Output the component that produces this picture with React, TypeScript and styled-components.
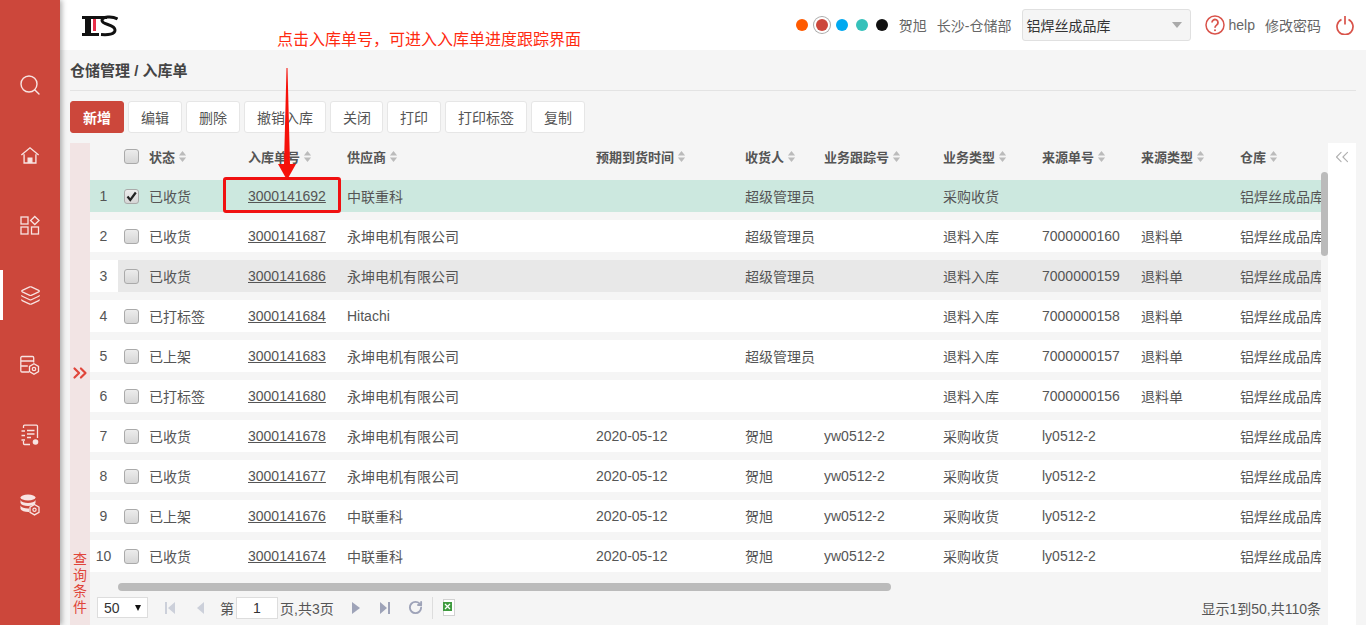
import React from 'react'
import styled, { createGlobalStyle } from 'styled-components'
import { Search, Layers, ChevronsRight, ChevronsLeft, RotateCw } from 'lucide-react'

const GlobalStyle = createGlobalStyle`
    html, body {
        margin: 0;
        padding: 0;
        height: 100%;
        overflow: hidden;
        background: #f5f5f5;
        font-family: "Liberation Sans", "Noto Sans CJK SC", sans-serif;
        font-size: 14px;
        color: #555;
    }
    * { box-sizing: border-box; }
`

const Page = styled.div`
    position: relative;
    display: flex;
    width: 1366px;
    height: 625px;
    overflow: hidden;
`

const Sidebar = styled.nav`
    width: 60px;
    flex: none;
    padding-top: 50px;
    background-color: #cc473b;
    box-shadow: 2px 0 5px rgba(0, 0, 0, 0.3);
    z-index: 2;
`

const NavItem = styled.div`
    height: 70px;
    display: flex;
    align-items: center;
    justify-content: center;
    color: #f8e4e2;
    position: relative;
`

const ActiveBar = styled.span`
    position: absolute;
    left: 0;
    top: 10px;
    width: 3px;
    height: 50px;
    background: #fff;
`

const Main = styled.div`
    flex: 1;
    display: flex;
    flex-direction: column;
    min-width: 0;
`

const Header = styled.header`
    height: 50px;
    flex: none;
    background: #fff;
    display: flex;
    align-items: center;
    padding-left: 22px;
    padding-right: 12px;
`

const Logo = styled.svg`
    width: 36px;
    height: 22px;
    margin-top: 1px;
`

const HeaderRight = styled.div`
    margin-left: auto;
    display: flex;
    align-items: center;
`

const Dots = styled.div`
    display: flex;
    align-items: center;
    gap: 8px;
    margin-right: 11px;
`

const Dot = styled.span<{ $color: string; $active?: boolean }>`
    width: 12px;
    height: 12px;
    border-radius: 50%;
    background: ${p => p.$color};
    ${p => p.$active && 'box-shadow: 0 0 0 2px #fff, 0 0 0 3px #aaa;'}
`

const UserText = styled.span<{ $gap: number; $lead?: number }>`
    margin-left: ${p => p.$lead || 0}px;
    margin-right: ${p => p.$gap}px;
    white-space: nowrap;
    color: #666;
`

const StoreSelect = styled.div`
    width: 169px;
    height: 32px;
    margin-right: 14px;
    padding: 0 4px;
    display: flex;
    align-items: center;
    justify-content: space-between;
    background: #f5f5f5;
    border: 1px solid #e0e0e0;
    border-radius: 3px;
    color: #333;
`

const Caret = styled.span`
    width: 0;
    height: 0;
    margin-right: 4px;
    border-left: 5px solid transparent;
    border-right: 5px solid transparent;
    border-top: 6px solid #aaa;
`

const Content = styled.main`
    flex: 1;
    min-height: 0;
    display: flex;
    flex-direction: column;
    padding: 0 10px;
`

const Crumb = styled.div`
    height: 41px;
    flex: none;
    line-height: 41px;
    font-size: 15px;
    font-weight: bold;
    color: #444;
    border-bottom: 1px solid #e3e3e3;
`

const Toolbar = styled.div`
    display: flex;
    gap: 4px;
    flex: none;
    margin: 10px 0;
`

const Btn = styled.button<{ $primary?: boolean; $tight?: boolean }>`
    height: 32px;
    padding: 0 ${p => (p.$tight ? '11px' : '12px')} 0 12px;
    font: inherit;
    border-radius: 3px;
    border: 1px solid ${p => (p.$primary ? '#cc473b' : '#e6e6e6')};
    background: ${p => (p.$primary ? '#cc473b' : '#fff')};
    color: ${p => (p.$primary ? '#fff' : '#555')};
    font-weight: ${p => (p.$primary ? 'bold' : 'normal')};
`

const Body = styled.div`
    flex: 1;
    min-height: 0;
    display: flex;
`

const QueryStrip = styled.div`
    width: 20px;
    flex: none;
    display: flex;
    flex-direction: column;
    align-items: center;
    justify-content: space-between;
    padding: 219px 0 10px;
    background: #f2e4e4;
    color: #e0453a;
`

const QueryText = styled.div`
    width: 14px;
    line-height: 16px;
    text-align: center;
`

const TableArea = styled.div`
    width: 1231px;
    flex: none;
    display: flex;
    flex-direction: column;
    overflow: hidden;
`

const gridCols = '28px 31px 99px 99px 249px 149px 79px 119px 99px 99px 99px 110px'

const HeadRow = styled.div`
    display: grid;
    grid-template-columns: ${gridCols};
    height: 37px;
    padding-bottom: 11px;
    flex: none;
    align-items: center;
    font-size: 13px;
    font-weight: bold;
    color: #555;
`

const HeadCell = styled.div`
    display: flex;
    align-items: center;
    gap: 3px;
    white-space: nowrap;
`

const Rows = styled.div`
    height: 400px;
    flex: none;
    overflow: hidden;
`

const Row = styled.div<{ $state?: 'checked' | 'hover' }>`
    display: grid;
    grid-template-columns: ${gridCols};
    height: 32px;
    margin-bottom: 8px;
    align-items: center;
    white-space: nowrap;
    background: ${p => (p.$state === 'checked' ? '#cce8df' : p.$state === 'hover' ? '#e8e8e8' : '#fff')};
`

const IndexCell = styled.div<{ $white?: boolean }>`
    height: 100%;
    display: flex;
    align-items: center;
    justify-content: center;
    padding-right: 1px;
    background: ${p => (p.$white ? '#fff' : 'transparent')};
`

const CheckCell = styled.div`
    display: flex;
    align-items: center;
    padding-left: 6px;
`

const CheckBox = styled.span`
    width: 15px;
    height: 15px;
    display: flex;
    align-items: center;
    justify-content: center;
    border: 1px solid #aaa;
    border-radius: 3px;
    background: linear-gradient(#ececec, #d6d6d6);
`

const OrderLink = styled.a`
    color: #555;
    text-decoration: underline;
`

const HScroll = styled.div`
    height: 14px;
    flex: none;
    padding: 3px 0 3px 28px;
`

const HThumb = styled.div`
    width: 773px;
    height: 8px;
    border-radius: 4px;
    background: #bbb;
`

const Pager = styled.div`
    height: 31px;
    flex: none;
    display: flex;
    align-items: center;
    padding-left: 7px;
    padding-bottom: 4px;
    color: #555;
`

const PageSize = styled.div`
    width: 51px;
    height: 21px;
    display: flex;
    align-items: center;
    justify-content: space-between;
    padding: 0 6px 0 6px;
    background: #fff;
    border: 1px solid #ddd;
    color: #333;
    margin-right: 17px;
`

const SizeCaret = styled.span`
    width: 0;
    height: 0;
    border-left: 3.5px solid transparent;
    border-right: 3.5px solid transparent;
    border-top: 6px solid #111;
`

const PagerIcon = styled.svg<{ $gap: number; $lead?: number }>`
    width: 10px;
    height: 12px;
    flex: none;
    margin-left: ${p => p.$lead || 0}px;
    margin-right: ${p => p.$gap}px;
`

const PageInput = styled.div`
    width: 42px;
    height: 22px;
    margin: 0 2px;
    line-height: 20px;
    text-align: center;
    background: #fff;
    border: 1px solid #ddd;
    color: #333;
`

const PagerSep = styled.span`
    width: 1px;
    height: 22px;
    margin: 0 9px;
    background: #ddd;
`

const PagerInfo = styled.span`
    margin-left: auto;
`

const VGutter = styled.div`
    width: 7px;
    flex: none;
    padding-top: 29px;
`

const VThumb = styled.div`
    height: 84px;
    border-radius: 4px;
    background: #bbb;
`

const RightPanel = styled.aside`
    width: 28px;
    flex: none;
    padding-top: 3px;
    background: #fff;
    display: flex;
    justify-content: center;
    align-items: flex-start;
    color: #b0b0b0;
`

const NoteText = styled.div`
    position: absolute;
    left: 277px;
    top: 31px;
    font-size: 16px;
    line-height: 18px;
    color: #ff2a10;
    white-space: nowrap;
`

const NoteArrow = styled.svg`
    position: absolute;
    left: 277px;
    top: 68px;
    width: 20px;
    height: 112px;
`

const NoteBox = styled.div`
    position: absolute;
    left: 223px;
    top: 177px;
    width: 118px;
    height: 36px;
    border: 3px solid #f01010;
    border-radius: 3px;
`

const HomeIcon = () => (
    <svg width="20" height="19" viewBox="0 0 22 20" fill="none" stroke="currentColor" strokeWidth="1.5">
        <path d="M1.500 9.500 11 1.500l9.500 8M4.500 8.500V18.300h13V8.500" />
        <path d="M9 18.300V13h4v5.300" fill="currentColor" />
    </svg>
)

const GridIcon = () => (
    <svg width="20" height="20" viewBox="0 0 20 20" fill="none" stroke="currentColor" strokeWidth="1.3">
        <rect x="1" y="2" width="7" height="7" />
        <path d="M14.800 1.500 19 5.500l-4.200 4-4.200-4z" />
        <rect x="1" y="12" width="7" height="7" />
        <rect x="11.500" y="12" width="7" height="7" />
    </svg>
)

const TableGearIcon = () => (
    <svg width="20" height="20" viewBox="0 0 20 20" fill="none" stroke="currentColor" strokeWidth="1.3">
        <path d="M9 17H2a1.200 1.200 0 0 1-1.200-1.200V2.700A1.200 1.200 0 0 1 2 1.500h10.500a1.200 1.200 0 0 1 1.200 1.200V7.500M.8 6h12.900M.8 11h7" />
        <path d="m14 8.800 4.500 2.600v5.200L14 19.200l-4.500-2.600v-5.200z" />
        <circle cx="14" cy="14" r="1.700" />
    </svg>
)

const NoteIcon = () => (
    <svg width="20" height="22" viewBox="0 0 20 22" fill="none" stroke="currentColor" strokeWidth="1.3">
        <path d="M3.500 4V2.200a1 1 0 0 1 1-1h12a1 1 0 0 1 1 1V14M10 20.500H4.500a1 1 0 0 1-1-1V17" />
        <path d="M1.500 7h3.500M1.500 11.500h3.500M1.500 16h3.500M7 6.500h7.500M7 10h7.500M7 13.500h4" />
        <circle cx="15.500" cy="18" r="2.800" fill="currentColor" stroke="none" />
    </svg>
)

const DbGearIcon = () => (
    <svg width="20" height="22" viewBox="0 0 20 22">
        <ellipse cx="8" cy="3.500" rx="7.500" ry="3" fill="currentColor" />
        <path d="M.5 6c1 2.200 4 3 7.500 3s6.500-.8 7.500-3v3c-1 2.200-4 3-7.500 3S1.500 11.200.5 9zM.5 11.500c1 2.200 4 3 7.500 3 .5 0 1 0 1.500-.1l-.5 3.500C5 18 1.500 17 .5 15z" fill="currentColor" />
        <path d="m14.500 10.500 4.500 2.600v5.200l-4.500 2.600-4.500-2.600v-5.200z" fill="#cc473b" stroke="currentColor" strokeWidth="1.3" />
        <circle cx="14.500" cy="15.700" r="1.600" fill="none" stroke="currentColor" strokeWidth="1.2" />
    </svg>
)

const SortIcon = () => (
    <svg width="9" height="11" viewBox="0 0 10 12" fill="#bbb">
        <path d="M5 0l4 5H1zM5 12 1 7h8z" />
    </svg>
)

const columns = ['状态', '入库单号', '供应商', '预期到货时间', '收货人', '业务跟踪号', '业务类型', '来源单号', '来源类型', '仓库']

type RowData = {
    status: string
    no: string
    supplier: string
    date?: string
    receiver?: string
    track?: string
    type: string
    source?: string
    sourceType?: string
}

const rows: RowData[] = [
    { status: '已收货', no: '3000141692', supplier: '中联重科', receiver: '超级管理员', type: '采购收货' },
    { status: '已收货', no: '3000141687', supplier: '永坤电机有限公司', receiver: '超级管理员', type: '退料入库', source: '7000000160', sourceType: '退料单' },
    { status: '已收货', no: '3000141686', supplier: '永坤电机有限公司', receiver: '超级管理员', type: '退料入库', source: '7000000159', sourceType: '退料单' },
    { status: '已打标签', no: '3000141684', supplier: 'Hitachi', type: '退料入库', source: '7000000158', sourceType: '退料单' },
    { status: '已上架', no: '3000141683', supplier: '永坤电机有限公司', receiver: '超级管理员', type: '退料入库', source: '7000000157', sourceType: '退料单' },
    { status: '已打标签', no: '3000141680', supplier: '永坤电机有限公司', type: '退料入库', source: '7000000156', sourceType: '退料单' },
    { status: '已收货', no: '3000141678', supplier: '永坤电机有限公司', date: '2020-05-12', receiver: '贺旭', track: 'yw0512-2', type: '采购收货', source: 'ly0512-2' },
    { status: '已收货', no: '3000141677', supplier: '永坤电机有限公司', date: '2020-05-12', receiver: '贺旭', track: 'yw0512-2', type: '采购收货', source: 'ly0512-2' },
    { status: '已上架', no: '3000141676', supplier: '中联重科', date: '2020-05-12', receiver: '贺旭', track: 'yw0512-2', type: '采购收货', source: 'ly0512-2' },
    { status: '已收货', no: '3000141674', supplier: '中联重科', date: '2020-05-12', receiver: '贺旭', track: 'yw0512-2', type: '采购收货', source: 'ly0512-2' },
]

const App = () => {
    return (
        <Page>
            <GlobalStyle />
            <Sidebar>
                <NavItem><Search size={24} strokeWidth={1.4} /></NavItem>
                <NavItem><HomeIcon /></NavItem>
                <NavItem><GridIcon /></NavItem>
                <NavItem><ActiveBar /><Layers size={21} strokeWidth={1.4} /></NavItem>
                <NavItem><TableGearIcon /></NavItem>
                <NavItem><NoteIcon /></NavItem>
                <NavItem><DbGearIcon /></NavItem>
            </Sidebar>
            <Main>
                <Header>
                    <Logo viewBox="0 0 36 22">
                        <path d="M0 1h25v3H9v14h8v3H0v-3h3V4H0z" fill="#111" />
                        <rect x="11" y="4" width="3" height="12" fill="#e8304a" />
                        <path d="M35.500 4C30 .8 20 1.500 20 5.500c0 4.500 13 3.500 13 9.500 0 4.500-7 5-14 4.500" fill="none" stroke="#111" strokeWidth="3" />
                    </Logo>
                    <HeaderRight>
                        <Dots>
                            <Dot $color="#ff5a00" />
                            <Dot $color="#cc473b" $active />
                            <Dot $color="#00a9f0" />
                            <Dot $color="#36c1ba" />
                            <Dot $color="#111" />
                        </Dots>
                        <UserText $gap={10}>贺旭</UserText>
                        <UserText $gap={10}>长沙-仓储部</UserText>
                        <StoreSelect>铝焊丝成品库<Caret /></StoreSelect>
                        <svg width="20" height="22" viewBox="0 0 20 22" fill="none" stroke="#d9534a" strokeWidth="1.5">
                            <circle cx="10" cy="11" r="9" />
                            <path d="M7 8.500a3 3 0 1 1 4.800 2.400c-1.200.9-1.800 1.500-1.800 2.900" strokeWidth="1.8" />
                            <circle cx="10" cy="16.300" r="1" fill="#d9534a" stroke="none" />
                        </svg>
                        <UserText $gap={10} $lead={4}>help</UserText>
                        <UserText $gap={15}>修改密码</UserText>
                        <svg width="18" height="20" viewBox="0 0 18 20" fill="none" stroke="#d9534a" strokeWidth="1.7">
                            <path d="M5.500 4.500a8 8 0 1 0 7 0M9 1v8.500" />
                        </svg>
                    </HeaderRight>
                </Header>
                <Content>
                    <Crumb>仓储管理 / 入库单</Crumb>
                    <Toolbar>
                        <Btn $primary>新增</Btn>
                        <Btn>编辑</Btn>
                        <Btn>删除</Btn>
                        <Btn>撤销入库</Btn>
                        <Btn $tight>关闭</Btn>
                        <Btn>打印</Btn>
                        <Btn>打印标签</Btn>
                        <Btn>复制</Btn>
                    </Toolbar>
                    <Body>
                        <QueryStrip>
                            <ChevronsRight size={22} strokeWidth={2.4} />
                            <QueryText>查询条件</QueryText>
                        </QueryStrip>
                        <TableArea>
                            <HeadRow>
                                <span />
                                <CheckCell><CheckBox /></CheckCell>
                                {columns.map(c => (
                                    <HeadCell key={c}>{c}<SortIcon /></HeadCell>
                                ))}
                            </HeadRow>
                            <Rows>
                                {rows.map((r, i) => (
                                    <Row key={r.no} $state={i === 0 ? 'checked' : i === 2 ? 'hover' : undefined}>
                                        <IndexCell $white={i === 2}>{i + 1}</IndexCell>
                                        <CheckCell>
                                            <CheckBox>
                                                {i === 0 && (
                                                    <svg width="11" height="11" viewBox="0 0 11 11">
                                                        <path d="M1.500 5.500 4.300 9 9.800 1.500" fill="none" stroke="#222" strokeWidth="2.2" />
                                                    </svg>
                                                )}
                                            </CheckBox>
                                        </CheckCell>
                                        <span>{r.status}</span>
                                        <span><OrderLink>{r.no}</OrderLink></span>
                                        <span>{r.supplier}</span>
                                        <span>{r.date}</span>
                                        <span>{r.receiver}</span>
                                        <span>{r.track}</span>
                                        <span>{r.type}</span>
                                        <span>{r.source}</span>
                                        <span>{r.sourceType}</span>
                                        <span>铝焊丝成品库</span>
                                    </Row>
                                ))}
                            </Rows>
                            <HScroll><HThumb /></HScroll>
                            <Pager>
                                <PageSize>50<SizeCaret /></PageSize>
                                <PagerIcon $gap={20} viewBox="0 0 10 12" fill="#ccd0da"><path d="M0 0h2v12H0zM10 0v12L3 6z" /></PagerIcon>
                                <PagerIcon $gap={15} viewBox="0 0 10 12" fill="#ccd0da"><path d="M9 0v12L2 6z" /></PagerIcon>
                                第
                                <PageInput>1</PageInput>
                                页,共3页
                                <PagerIcon $gap={19} $lead={17} viewBox="0 0 10 12" fill="#9ea3b8"><path d="M1 0v12l8-6z" /></PagerIcon>
                                <PagerIcon $gap={18} viewBox="0 0 10 12" fill="#9ea3b8"><path d="M8 0h2v12H8zM0 0v12l7-6z" /></PagerIcon>
                                <RotateCw size={15} strokeWidth={3} color="#9ea3b8" />
                                <PagerSep />
                                <svg width="14" height="18" viewBox="0 0 14 18">
                                    <rect x="1.500" y="0.500" width="11" height="16" fill="#fff" stroke="#aaa" strokeDasharray="1 1" />
                                    <rect x="1" y="3" width="9" height="9" fill="#3f9b3f" />
                                    <path d="m3 5 5 5M8 5l-5 5" stroke="#fff" strokeWidth="1.3" />
                                </svg>
                                <PagerInfo>显示1到50,共110条</PagerInfo>
                            </Pager>
                        </TableArea>
                        <VGutter><VThumb /></VGutter>
                        <RightPanel><ChevronsLeft size={22} strokeWidth={1.2} /></RightPanel>
                    </Body>
                </Content>
            </Main>
            <NoteText>点击入库单号，可进入入库单进度跟踪界面</NoteText>
            <NoteBox />
            <NoteArrow viewBox="0 0 20 112">
                <path d="M9.500 0h1l2.500 96 6 0-9 16-9-16 6 0z" fill="#f5110a" />
            </NoteArrow>
        </Page>
    )
}

export default App
